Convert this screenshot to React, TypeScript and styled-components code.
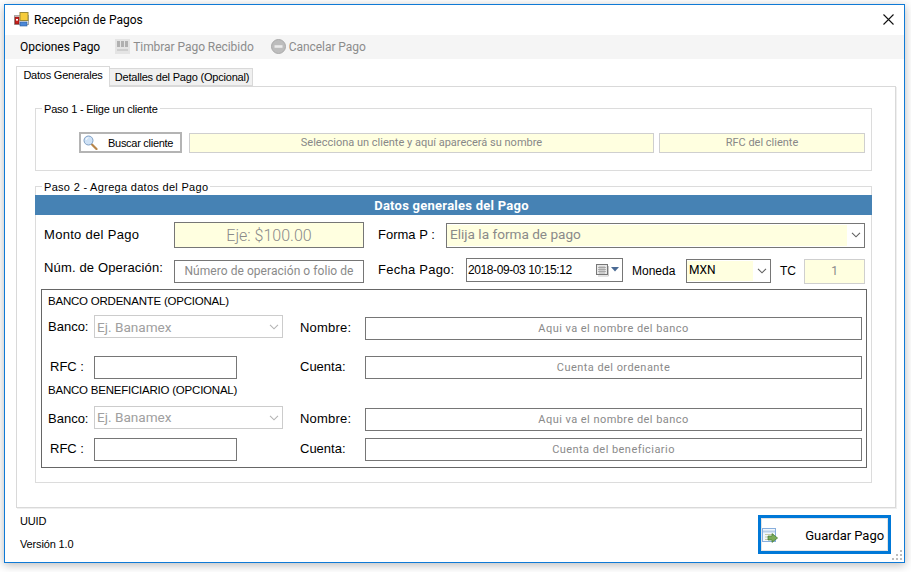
import React from "react";
import styled, { createGlobalStyle } from "styled-components";

const Global = createGlobalStyle`
  html, body { margin: 0; padding: 0; background: #fff; }
  * { box-sizing: border-box; }
  body { font-family: "Liberation Sans", Arial, sans-serif; color: #000; }
`;
const segoe = `Roboto, "Open Sans", sans-serif`;

const Page = styled.div`
  width: 911px; height: 572px; padding: 4px 6px 9px 4px; overflow: hidden;
`;
const Win = styled.div`
  position: relative; width: 901px; height: 559px; background: #fff; border: 1px solid #0f7ad6;
  box-shadow: 0 2px 9px rgba(0,0,0,.28);
  display: flex; flex-direction: column;
`;
const TitleBar = styled.div`
  height: 30px; flex: none; display: flex; align-items: center; padding: 0 10px 2px 9px;
`;
const TitleText = styled.span`
  font: 12px/14px ${segoe}; margin: 2px 0 0 5px; flex: 1;
`;
const MenuBar = styled.div`
  height: 24px; flex: none; background: #f5f5f5; display: flex; align-items: center; padding: 0 0 1px 15px;
`;
const MenuItem = styled.span<{ $off?: boolean; $ml?: number }>`
  font: 12px ${segoe}; color: ${p => (p.$off ? "#8c8c8c" : "#000")};
  letter-spacing: ${p => (p.$off ? -0.05 : -0.05)}px;
  margin-left: ${p => p.$ml ?? 0}px; display: inline-flex; align-items: center; gap: 3px;
`;
const TabStrip = styled.div`
  margin: 7px 0 0 11px; height: 20px; flex: none; display: flex; align-items: flex-end;
`;
const Tab = styled.div<{ $active?: boolean }>`
  height: ${p => (p.$active ? 21 : 18)}px; width: ${p => (p.$active ? 94 : 143)}px;
  margin-bottom: ${p => (p.$active ? -1 : 0)}px; font: 11px/1 "Liberation Sans", sans-serif;
  letter-spacing: ${p => (p.$active ? -0.22 : -0.2)}px; position: relative; z-index: 1;
  background: ${p => (p.$active ? "#fff" : "#f0f0f0")}; border: 1px solid #d9d9d9;
  border-bottom: ${p => (p.$active ? "0" : "1px solid #d9d9d9")};
  ${p => (p.$active ? "" : "border-left: 0;")}
  display: flex; align-items: center; justify-content: center;
  padding: 0 0 ${p => (p.$active ? 3 : 0)}px ${p => (p.$active ? 0 : 2)}px;
`;
const TabPage = styled.div`
  margin-left: 11px; width: 880px; height: 422px; flex: none; border: 1px solid #d9d9d9;
  box-shadow: 1px 1px 0 #efefef; padding: 14px 23px 0 18px;
`;
const Group = styled.fieldset<{ $h: number; $mt?: number }>`
  margin: ${p => p.$mt ?? 0}px 0 0 0; padding: 0; min-width: 0; width: 837px; height: ${p => p.$h}px;
  border: 1px solid #dcdcdc; border-radius: 0;
`;
const Legend = styled.legend<{ $ls: number }>`
  margin-left: 6px; padding: 0 2px; font: 11px/16px "Liberation Sans", sans-serif; height: 14px;
  letter-spacing: ${p => p.$ls}px;
`;
const ClientRow = styled.div`
  display: flex; align-items: center; margin-top: 17px; padding-left: 43px;
`;
const SearchButton = styled.div`
  width: 103px; height: 21px; border: 2px solid #b4b4b4; background: #fff; display: flex; align-items: center;
  padding-left: 2px; font: 11px "Liberation Sans", sans-serif; letter-spacing: -0.28px; gap: 10px;
`;
const Hint = styled.div<{ $w: number; $ml: number }>`
  width: ${p => p.$w}px; height: 20px; margin-left: ${p => p.$ml}px; background: #ffffe0; border: 1px solid #cfcfcf;
  display: flex; align-items: center; justify-content: center; color: #888; font: 11px ${segoe}; padding-bottom: 1px;
`;
const Header = styled.div`
  margin: 2px -1px 0; height: 20px; background: #4682b4; color: #fff; text-align: center; padding-right: 4px;
  font: 700 13px/21px ${segoe}; letter-spacing: 0.25px;
`;
const FormRow = styled.div<{ $cols: string; $mt: number; $h: number }>`
  display: grid; grid-template-columns: ${p => p.$cols}; align-items: center; padding-left: 8px;
  margin-top: ${p => p.$mt}px; height: ${p => p.$h}px;
`;
const Label = styled.div<{ $size?: number; $pl?: number; $up?: number; $ls?: number }>`
  font: ${p => p.$size ?? 13}px/16px "Liberation Sans", sans-serif; padding-left: ${p => p.$pl ?? 0}px;
  margin-bottom: ${p => p.$up ?? 0}px; white-space: nowrap; letter-spacing: ${p => p.$ls ?? 0}px;
`;
const Input = styled.div<{ $h: number; $bg?: string; $size?: number; $bd?: string; $up?: number; $ls?: number; $w300?: boolean }>`
  height: ${p => p.$h}px; background: ${p => p.$bg ?? "#fff"}; border: 1px solid ${p => p.$bd ?? "#767676"};
  display: flex; align-items: center; justify-content: center; overflow: hidden; white-space: nowrap;
  color: #8a8a8a; font: ${p => (p.$w300 ? 300 : 400)} ${p => p.$size ?? 12}px ${segoe}; letter-spacing: ${p => p.$ls ?? 0}px;
  margin-bottom: ${p => p.$up ?? 0}px;
`;
const Combo = styled.div<{ $h: number; $bd?: string; $up?: number; $color?: string; $size?: number }>`
  height: ${p => p.$h}px; border: 1px solid ${p => p.$bd ?? "#767676"}; background: #fff; display: flex; align-items: stretch;
  margin-bottom: ${p => p.$up ?? 0}px;
  color: ${p => p.$color ?? "#8a8a8a"}; font: ${p => p.$size ?? 13.6}px ${segoe};
`;
const ComboText = styled.div<{ $fill?: string; $pb?: number; $pl?: number }>`
  flex: 1; background: ${p => p.$fill ?? "transparent"}; display: flex; align-items: center;
  padding: 0 0 ${p => p.$pb ?? 0}px ${p => p.$pl ?? 3}px; margin: 1px 0;
  white-space: nowrap; overflow: hidden;
`;
const ComboBtn = styled.div`
  width: 17px; flex: none; display: flex; align-items: center; justify-content: center;
`;
const Picker = styled.div`
  height: 24px; border: 1px solid #767676; display: flex; align-items: center; padding: 0 1px 0 1px;
  font: 12px "Liberation Sans", sans-serif; margin-bottom: 2px;
`;
const PickerText = styled.span` flex: 1; letter-spacing: -0.4px; padding-bottom: 1px; `;
const BankBox = styled.div`
  margin: 5px 0 0 5px; width: 826px; height: 179px; border: 1px solid #666; padding-left: 6px;
`;
const SectionTitle = styled.div<{ $mt: number }>`
  margin-top: ${p => p.$mt}px; height: 14px; font: 11.5px/14px "Liberation Sans", sans-serif; letter-spacing: -0.22px; white-space: nowrap;
`;
const BankRow = styled.div<{ $mt: number; $h: number }>`
  display: grid; grid-template-columns: 46px 189px 82px 497px; align-items: start;
  margin-top: ${p => p.$mt}px; height: ${p => p.$h}px;
`;
const BankLabel = styled.div<{ $pl?: number; $mt?: number; $ls?: number }>`
  font: 13px/16px "Liberation Sans", sans-serif; padding-left: ${p => p.$pl ?? 0}px; margin-top: ${p => p.$mt ?? 0}px; white-space: nowrap;
  letter-spacing: ${p => p.$ls ?? 0}px;
`;
const BankInput = styled(Input)<{ $w?: number; $mt?: number }>`
  width: ${p => (p.$w ? `${p.$w}px` : "auto")}; margin-top: ${p => p.$mt ?? 0}px; font-size: 11px; letter-spacing: .45px; padding-bottom: 1px;
`;
const Footer = styled.div`
  flex: 1; display: flex; justify-content: space-between; padding: 7px 13px 0 15px;
`;
const Info = styled.div`
  font: 11px/14px "Liberation Sans", sans-serif; letter-spacing: -0.15px; display: flex; flex-direction: column; gap: 9px; margin-top: -1px;
`;
const SaveButton = styled.div`
  width: 133px; height: 39px; border: 3px solid #0078d7; background: #fff; display: flex; align-items: center;
  box-shadow: inset 0 0 0 1px #e4e4e4;
  justify-content: space-between; padding: 2px 4px 0 1px; font: 13px ${segoe}; letter-spacing: -0.05px;
`;
const Grip = styled.svg`
  position: absolute; right: 1px; bottom: 1px;
`;

const Chevron = ({ c = "#606060" }: { c?: string }) => (
  <svg width="10" height="6" viewBox="0 0 10 6"><path d="M1 .8 5 4.8 9 .8" fill="none" stroke={c} strokeWidth="1.1" /></svg>
);
const AppIcon = () => (
  <svg width="15" height="15" viewBox="0 0 15 15">
    <rect x=".5" y="3.5" width="14" height="9" fill="#eee" stroke="#aaa" />
    <rect x="6" y="0.5" width="8" height="8" fill="#f6cc3c" stroke="#9a8a3a" />
    <rect x="1" y="5" width="4" height="7" fill="#c8201c" stroke="#7c1512" strokeWidth=".6" />
    <rect x="6" y="10" width="7" height="4" fill="#4c88d8" stroke="#2a5a9a" strokeWidth=".6" />
    <rect x="2" y="7" width="2" height="1.6" fill="#fff" />
  </svg>
);
const CloseIcon = () => (
  <svg width="11" height="11" viewBox="0 0 11 11"><path d="M.5.5 10.5 10.5M10.5.5.5 10.5" stroke="#111" strokeWidth="1.1" /></svg>
);
const StampIcon = () => (
  <svg width="15" height="15" viewBox="0 0 15 15">
    <rect x="0" y="0" width="15" height="15" fill="#e4e4e4" />
    <path d="M2 2h3v6H2zM6 2h3v6H6zM10 2h3v6h-3z" fill="#b0b0b0" />
    <path d="M2 11h11" stroke="#c4c4c4" strokeWidth="1.4" />
  </svg>
);
const CancelIcon = () => (
  <svg width="15" height="15" viewBox="0 0 15 15">
    <circle cx="7.5" cy="7.5" r="7" fill="#bdbdbd" stroke="#a9a9a9" />
    <rect x="3.5" y="6.2" width="8" height="2.6" fill="#ececec" />
  </svg>
);
const SearchIcon = () => (
  <svg width="15" height="15" viewBox="0 0 15 15">
    <path d="M9 9.5 13.5 14" stroke="#b8864a" strokeWidth="2.2" strokeLinecap="round" />
    <circle cx="5.5" cy="5.5" r="4.5" fill="#cfe2f6" stroke="#7f9fc4" />
    <path d="M3 5a2.6 2.6 0 0 1 2.4-2.3" stroke="#fff" fill="none" />
  </svg>
);
const CalendarIcon = () => (
  <svg width="25" height="14" viewBox="0 0 25 14">
    <rect x=".5" y="1.5" width="11" height="10" fill="#e8e8e8" stroke="#777" />
    <path d="M2 4.5h8M2 6.5h8M2 8.5h8M4 3v8M6 3v8M8 3v8" stroke="#9a9a9a" strokeWidth=".7" />
    <path d="M12.5 3v10H2" fill="none" stroke="#c8c8c8" />
    <path d="M15 4h8l-4 4.5z" fill="#4a6a94" />
  </svg>
);
const SaveIcon = () => (
  <svg width="16" height="16" viewBox="0 0 16 16">
    <rect x=".5" y=".5" width="13" height="13" fill="#f2f7fc" stroke="#88aedc" />
    <path d="M1 3.5h12" stroke="#b9cfe8" strokeWidth="2" />
    <path d="M3 6.5h9M3 9h9M3 11.5h9" stroke="#c9c9a8" />
    <path d="M6 8h4V5.6L15.6 10 10 14.4V12H6z" fill="#7cab58" stroke="#3f7a30" strokeWidth=".7" />
  </svg>
);

const Bank = ({ text, pb }: { text: string; pb?: number }) => (
  <Combo $h={23} $bd="#cccccc" $color="#a0a0a0">
    <ComboText $pb={pb} $pl={2}>{text}</ComboText>
    <ComboBtn><Chevron c="#b4b4b4" /></ComboBtn>
  </Combo>
);

export default function App() {
  return (
    <Page>
      <Global />
      <Win>
        <TitleBar>
          <AppIcon />
          <TitleText>Recepción de Pagos</TitleText>
          <CloseIcon />
        </TitleBar>
        <MenuBar>
          <MenuItem>Opciones Pago</MenuItem>
          <MenuItem $off $ml={15}><StampIcon />Timbrar Pago Recibido</MenuItem>
          <MenuItem $off $ml={17}><CancelIcon />Cancelar Pago</MenuItem>
        </MenuBar>
        <TabStrip>
          <Tab $active>Datos Generales</Tab>
          <Tab>Detalles del Pago (Opcional)</Tab>
        </TabStrip>
        <TabPage>
          <Group $h={70}>
            <Legend $ls={-0.2}>Paso 1 - Elige un cliente</Legend>
            <ClientRow>
              <SearchButton><SearchIcon />Buscar cliente</SearchButton>
              <Hint $w={465} $ml={7}>Selecciona un cliente y aquí aparecerá su nombre</Hint>
              <Hint $w={206} $ml={5}>RFC del cliente</Hint>
            </ClientRow>
          </Group>
          <Group $h={304} $mt={8}>
            <Legend $ls={0.3}>Paso 2 - Agrega datos del Pago</Legend>
            <Header>Datos generales del Pago</Header>
            <FormRow $cols="130px 190px 82px 419px" $mt={7} $h={26}>
              <Label $ls={0.3}>Monto del Pago</Label>
              <Input $h={26} $bg="#ffffe0" $size={16} $w300>Eje: $100.00</Input>
              <Label $pl={14}>Forma P :</Label>
              <Combo $h={25}>
                <ComboText $fill="#ffffe0" $pb={2}>Elija la forma de pago</ComboText>
                <ComboBtn><Chevron /></ComboBtn>
              </Combo>
            </FormRow>
            <FormRow $cols="130px 190px 102px 157px 63px 85px 33px 61px" $mt={10} $h={26}>
              <Label $up={6} $ls={0.15}>Núm. de Operación:</Label>
              <Input $h={23} $ls={0.05}>Número de operación o folio de</Input>
              <Label $pl={14} $up={2} $ls={0.25}>Fecha Pago:</Label>
              <Picker>
                <PickerText>2018-09-03 10:15:12</PickerText>
                <CalendarIcon />
              </Picker>
              <Label $pl={9} $size={12}>Moneda</Label>
              <Combo $h={24} $color="#000" $size={12}>
                <ComboText $fill="#ffffe0" $pb={3} $pl={2}>MXN</ComboText>
                <ComboBtn><Chevron /></ComboBtn>
              </Combo>
              <Label $pl={9} $size={12}>TC</Label>
              <Input $h={25} $bg="#ffffe0" $bd="#cfcfcf" $size={12}>1</Input>
            </FormRow>
            <BankBox>
              <SectionTitle $mt={4}>BANCO ORDENANTE (OPCIONAL)</SectionTitle>
              <BankRow $mt={7} $h={25}>
                <BankLabel $mt={4}>Banco:</BankLabel>
                <Bank text="Ej. Banamex" />
                <BankLabel $pl={17} $mt={5} $ls={0.2}>Nombre:</BankLabel>
                <BankInput $h={23} $mt={2}>Aqui va el nombre del banco</BankInput>
              </BankRow>
              <BankRow $mt={16} $h={23}>
                <BankLabel $pl={2} $mt={3}>RFC :</BankLabel>
                <BankInput $h={23} $w={143} />
                <BankLabel $pl={17} $mt={3}>Cuenta:</BankLabel>
                <BankInput $h={23}>Cuenta del ordenante</BankInput>
              </BankRow>
              <SectionTitle $mt={4}>BANCO BENEFICIARIO (OPCIONAL)</SectionTitle>
              <BankRow $mt={9} $h={25}>
                <BankLabel $mt={5}>Banco:</BankLabel>
                <Bank text="Ej. Banamex" pb={2} />
                <BankLabel $pl={17} $mt={5} $ls={0.2}>Nombre:</BankLabel>
                <BankInput $h={23} $mt={2}>Aqui va el nombre del banco</BankInput>
              </BankRow>
              <BankRow $mt={7} $h={23}>
                <BankLabel $pl={2} $mt={3}>RFC :</BankLabel>
                <BankInput $h={23} $w={143} />
                <BankLabel $pl={17} $mt={3}>Cuenta:</BankLabel>
                <BankInput $h={23}>Cuenta del beneficiario</BankInput>
              </BankRow>
            </BankBox>
          </Group>
        </TabPage>
        <Footer>
          <Info>
            <span>UUID</span>
            <span>Versión 1.0</span>
          </Info>
          <SaveButton><SaveIcon />Guardar Pago</SaveButton>
        </Footer>
        <Grip width="11" height="11" viewBox="0 0 11 11">
          <path d="M8 0h2v2H8zM4 4h2v2H4zM8 4h2v2H8zM0 8h2v2H0zM4 8h2v2H4zM8 8h2v2H8z" fill="#bdbdbd" />
        </Grip>
      </Win>
    </Page>
  );
}
